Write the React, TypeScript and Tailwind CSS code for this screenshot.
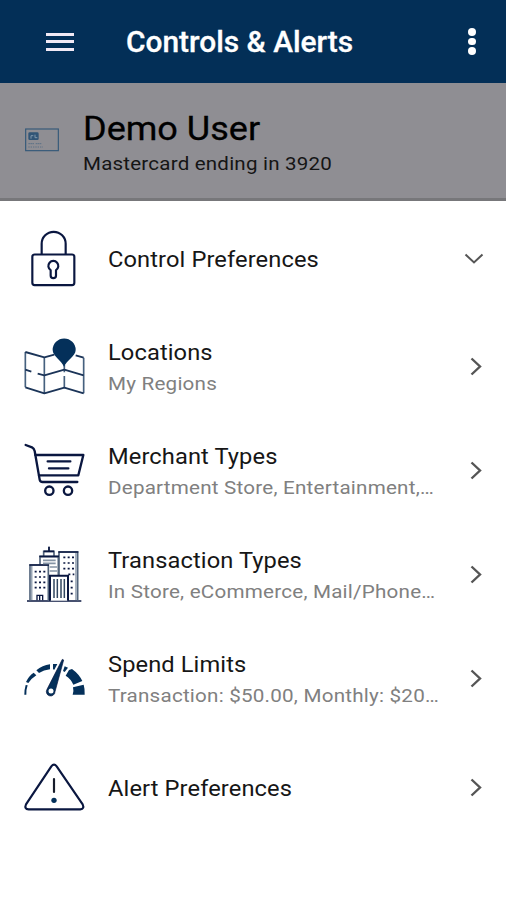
import type { ReactNode } from "react";

const NAVY = "#04305a";
const INK = "#0a1740";

function LockIcon() {
  return (
    <svg className="h-20 w-20 shrink-0" viewBox="0 -4.5 240 240" fill="none" stroke={INK} strokeWidth="6.5" strokeLinejoin="round">
      <rect x="52" y="102" width="126" height="92" rx="7" />
      <path d="M80 102V70a36 36 0 0 1 72 0v32" />
      <path d="M107 149a15 15 0 1 1 16 0v16a8 8 0 0 1-16 0z" />
    </svg>
  );
}

function MapIcon() {
  return (
    <svg className="h-20 w-20 shrink-0" viewBox="0 -9 240 240" fill="none" stroke="#46617f" strokeWidth="5">
      <path d="M31 66V172M88 82V190M206 83V190M148 105v22M148 138v36" />
      <path d="M31 66L88 82L118 74M182 76L206 83M31 119L49 125M68 131L88 136L148 119L206 136M31 172L88 190L148 173L206 190" strokeWidth="5.5" stroke="#1b3458" strokeLinejoin="round" />
      <path d="M147 110C139 92 113 78 113 60a34.5 34.5 0 0 1 69 0c0 18-27 32-35 50z" fill={NAVY} stroke="none" />
    </svg>
  );
}

function CartIcon() {
  return (
    <svg className="h-20 w-20 shrink-0" viewBox="0 -12 240 240" fill="none" stroke={INK} strokeWidth="7" strokeLinecap="round" strokeLinejoin="round">
      <path d="M32 30l19 7q6 3 8 11l15 86q1 7 9 7h104" />
      <path d="M61 60H205L190 121H72" />
      <path d="M98 79h68M102 100h58" />
      <circle cx="103" cy="167" r="12.5" />
      <circle cx="159" cy="167" r="12.5" />
    </svg>
  );
}

function BuildingsIcon() {
  return (
    <svg className="h-20 w-20 shrink-0" viewBox="0 -15 240 240" fill="none">
      <path d="M36 183H199" stroke={INK} strokeWidth="5" />
      <g stroke="#52647b" strokeWidth="5">
        <path d="M45 182V75H100V182M75 75V50H130V107M132 107V36H188V182" />
        <path d="M86 49V34H117V49M102 34V20" />
        <path d="M183 39V180" stroke="#9aa6b5" />
        <path d="M50 78V180" stroke="#9aa6b5" />
      </g>
      <path d="M43 75H102M73 49H132M130 36H190M86 34H117M102 20V34" stroke={INK} strokeWidth="5" />
      <path d="M84 61H122M84 70H122M104 81H126M104 93H126" stroke="#8594a5" strokeWidth="5" />
      <path d="M59 95H91M59 111H91M59 127H91M59 143H91" stroke={INK} strokeWidth="5" strokeDasharray="6 7" />
      <path d="M145 52H178M145 69H178M145 86H178M160 103H178M167 124H178M167 143H178M167 161H178" stroke={INK} strokeWidth="5" strokeDasharray="6 7" />
      <path d="M66 181V166H83V181M74 166V181" stroke={INK} strokeWidth="4" />
      <path d="M105 182V107H159V182" stroke={INK} strokeWidth="6" fill="#fff" />
      <path d="M117 117V174M127 117V174M138 117V174M148 117V174" stroke="#31465f" strokeWidth="4.5" />
    </svg>
  );
}

function GaugeIcon() {
  return (
    <svg className="h-20 w-20 shrink-0" viewBox="0 -18 240 240" fill={NAVY}>
      <path d="M28 149Q28 133 32 120L38 121Q33 135 34 149z" />
      <path d="M33 111Q41 93 56 83L64 91Q51 99 40 114z" />
      <path d="M64 76Q82 61 105 58V73Q86 75 72 84z" />
      <path d="M114 57H127L118 74L114 73z" />
      <path d="M149 64L159 68L149 81L144 78z" />
      <path d="M162 75L171 72Q192 87 202 108L175 119Q168 102 152 92z" />
      <path d="M206 119Q210 132 209 149H173Q177 138 174 127z" />
      <path d="M142 43L146 45L120 140A13 13 0 1 1 96 133z" stroke={INK} strokeWidth="2" />
      <circle cx="108" cy="138" r="7.5" fill="#fff" />
    </svg>
  );
}

function WarningIcon() {
  return (
    <svg className="h-20 w-20 shrink-0" viewBox="0 -9 240 240" fill="none" stroke={INK} strokeWidth="6.5" strokeLinecap="round" strokeLinejoin="round">
      <path d="M109 46Q117 36 125 46L203 160Q209 174 196 175H41Q27 174 33 160z" />
      <path d="M117 84v39" stroke="#171c2b" />
      <circle cx="117" cy="148" r="8" fill={NAVY} stroke="none" />
    </svg>
  );
}

function CardIcon() {
  return (
    <svg className="mt-[45px] h-6 w-9 shrink-0" viewBox="0 0 108 72" fill="none">
      <rect x="5" y="3" width="98" height="65" stroke="#355979" strokeWidth="3.5" />
      <rect x="13" y="13" width="31" height="23" rx="4" fill="#315576" />
      <path d="M21 32v-9h7M33 20v9h7" stroke="#8097aa" strokeWidth="3" />
      <path d="M13 47h18M35 47h18" stroke="#5c7186" strokeWidth="3" strokeDasharray="5 1" />
      <path d="M13 57h44" stroke="#5c7186" strokeWidth="3" strokeDasharray="4 3" />
    </svg>
  );
}

type RowProps = { icon: ReactNode; title: string; detail?: string; open?: boolean; tall?: boolean };

function Row({ icon, title, detail, open, tall }: RowProps) {
  return (
    <li className={`flex items-center pl-[15px] ${tall ? "h-[113px]" : "h-[104px]"}`}>
      {icon}
      <div className={`ml-[13px] w-[345px] whitespace-nowrap ${detail ? "pt-0.5" : "pt-[3px]"}`}>
        <div className="w-fit origin-left scale-x-[1.075] text-[22px] leading-[30px] tracking-[0.1px] text-[#161616]">{title}</div>
        {detail && <div className="mt-[2px] w-fit origin-left scale-x-[1.085] text-[19px] leading-[28px] tracking-[0.2px] text-[#808080]">{detail}</div>}
      </div>
      {open ? (
        <svg className="ml-[11px] h-3 w-5" viewBox="0 0 20 12" fill="none" stroke="#555" strokeWidth="2">
          <path d="M1.5 1.5L10 9.5L18.5 1.5" />
        </svg>
      ) : (
        <svg className="ml-[17px] h-5 w-3" viewBox="0 0.5 12 20" fill="none" stroke="#555" strokeWidth="2.4">
          <path d="M1.5 2L10 10L1.5 18" />
        </svg>
      )}
    </li>
  );
}

export default function App() {
  return (
    <main className="h-[900px] w-[506px] overflow-hidden bg-white font-['Roboto',sans-serif]">
      <header className="flex h-[83px] items-center bg-[#032f57] pl-[46px] text-white">
        <div className="flex w-7 flex-col gap-[4.5px]">
          <span className="h-[3px] bg-[#f1e9f5]" />
          <span className="h-[3px] bg-[#f1e9f5]" />
          <span className="h-[3px] bg-[#f1e9f5]" />
        </div>
        <div className="ml-[52px] w-[340px]">
          <h1 className="w-fit origin-left scale-x-[1.03] whitespace-nowrap text-[29px] font-medium leading-9 [-webkit-text-stroke:0.3px_white]">Controls &amp; Alerts</h1>
        </div>
        <div className="ml-[2px] flex flex-col gap-[2px]">
          <span className="size-[7.5px] rounded-full bg-white" />
          <span className="size-[7.5px] rounded-full bg-white" />
          <span className="size-[7.5px] rounded-full bg-white" />
        </div>
      </header>
      <section className="flex h-[118px] border-b-3 border-[#77777a] bg-[#8f8e93] pl-6 whitespace-nowrap">
        <CardIcon />
        <div className="ml-[23px] pt-[26px]">
          <h2 className="w-fit origin-left scale-x-[1.06] text-[34px] leading-[38px] text-black [-webkit-text-stroke:0.3px_black]">Demo User</h2>
          <p className="mt-1 w-fit origin-left scale-x-[1.08] text-[19px] leading-[26px] tracking-[0.2px] text-[#151515]">Mastercard ending in 3920</p>
        </div>
      </section>
      <ul className="pt-px">
        <Row icon={<LockIcon />} title="Control Preferences" open tall />
        <Row icon={<MapIcon />} title="Locations" detail="My Regions" />
        <Row icon={<CartIcon />} title="Merchant Types" detail="Department Store, Entertainment,…" />
        <Row icon={<BuildingsIcon />} title="Transaction Types" detail="In Store, eCommerce, Mail/Phone…" />
        <Row icon={<GaugeIcon />} title="Spend Limits" detail="Transaction: $50.00, Monthly: $20…" />
        <Row icon={<WarningIcon />} title="Alert Preferences" tall />
      </ul>
    </main>
  );
}
